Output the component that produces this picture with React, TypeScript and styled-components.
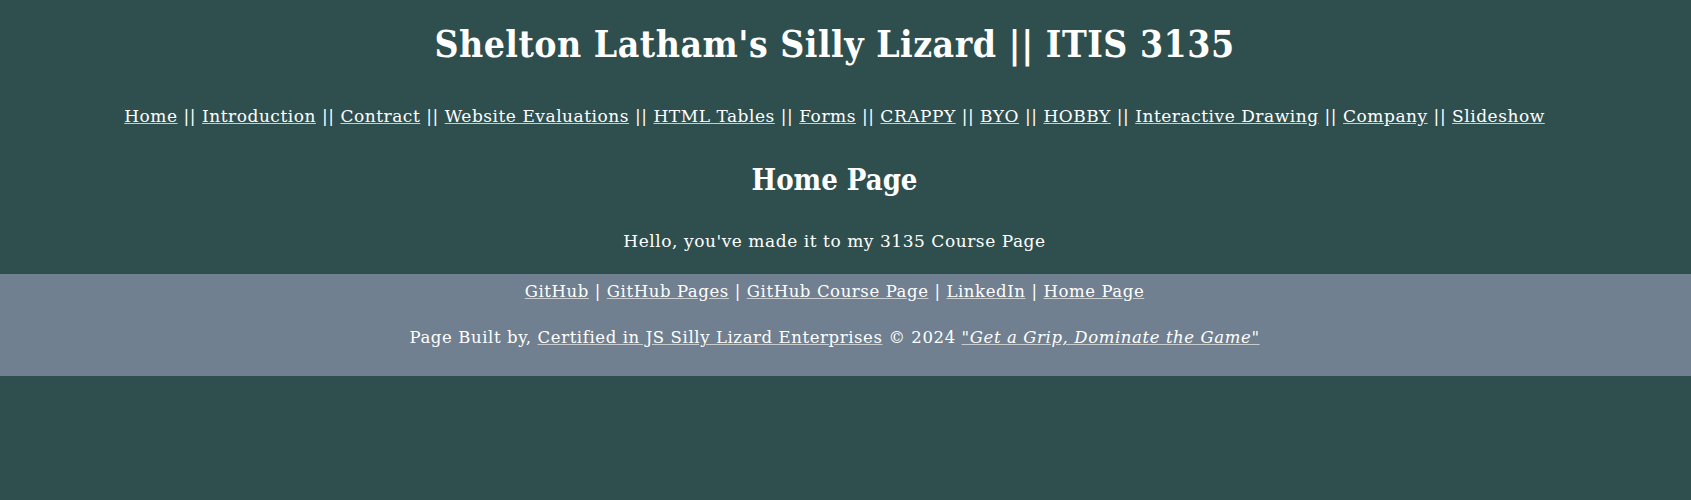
import React from "react";
import styled, { createGlobalStyle } from "styled-components";

const GlobalStyle = createGlobalStyle`
  html, body {
    margin: 0;
    padding: 0;
    background-color: #2f4f4f;
  }
  body {
    color: #ffffff;
    font-family: "DejaVu Serif", "Liberation Serif", serif;
  }
`;

const navLinks = [
  "Home",
  "Introduction",
  "Contract",
  "Website Evaluations",
  "HTML Tables",
  "Forms",
  "CRAPPY",
  "BYO",
  "HOBBY",
  "Interactive Drawing",
  "Company",
  "Slideshow",
];

const footerLinks = ["GitHub", "GitHub Pages", "GitHub Course Page", "LinkedIn", "Home Page"];

const App = () => {
  return (
    <>
      <GlobalStyle />
      <Page>
        <Header>
          <Title>Shelton Latham's Silly Lizard || ITIS 3135</Title>
          <Nav>
            {navLinks.map((name, i) => (
              <React.Fragment key={name}>
                {i > 0 && " || "}
                <Link href="#">{name}</Link>
              </React.Fragment>
            ))}
          </Nav>
        </Header>
        <Main>
          <Heading>Home Page</Heading>
          <Intro>Hello, you've made it to my 3135 Course Page</Intro>
        </Main>
        <Footer>
          <FooterNav>
            {footerLinks.map((name, i) => (
              <React.Fragment key={name}>
                {i > 0 && " | "}
                <Link href="#">{name}</Link>
              </React.Fragment>
            ))}
          </FooterNav>
          <Credit>
            Page Built by, <Link href="#">Certified in JS Silly Lizard Enterprises</Link> © 2024{" "}
            <Link href="#">
              <em>"Get a Grip, Dominate the Game"</em>
            </Link>
          </Credit>
        </Footer>
      </Page>
    </>
  );
};

export default App;

const Page = styled.div`
  min-height: 500px;
  background-color: #2f4f4f;
`;

const Header = styled.header`
  text-align: center;
  padding: 21px 22px 0 0;
`;

const Title = styled.h1`
  margin: 0;
  font-family: "DejaVu Serif Condensed", "DejaVu Serif", serif;
  font-size: 37px;
  line-height: 46px;
  letter-spacing: 0.5px;
  font-weight: bold;
`;

const Nav = styled.nav`
  margin-top: 38px;
  font-size: 17px;
  line-height: 22px;
  letter-spacing: 0.53px;
`;

const Link = styled.a`
  color: #ffffff;
  text-decoration: underline;
  text-decoration-color: #c8cccc;
`;

const Main = styled.main`
  text-align: center;
  padding: 34px 22px 0 0;
`;

const Heading = styled.h2`
  margin: 0;
  font-family: "DejaVu Serif Condensed", "DejaVu Serif", serif;
  font-size: 29px;
  line-height: 38px;
  font-weight: bold;
`;

const Intro = styled.p`
  margin: 31px 0 0;
  font-size: 17px;
  line-height: 22px;
  letter-spacing: 0.55px;
`;

const Footer = styled.footer`
  margin-top: 22px;
  background-color: #708090;
  text-align: center;
  padding: 8px 22px 28px 0;
  font-size: 16.5px;
  line-height: 20px;
  letter-spacing: 0.6px;
`;

const FooterNav = styled.div``;

const Credit = styled.p`
  margin: 26px 0 0;
`;
